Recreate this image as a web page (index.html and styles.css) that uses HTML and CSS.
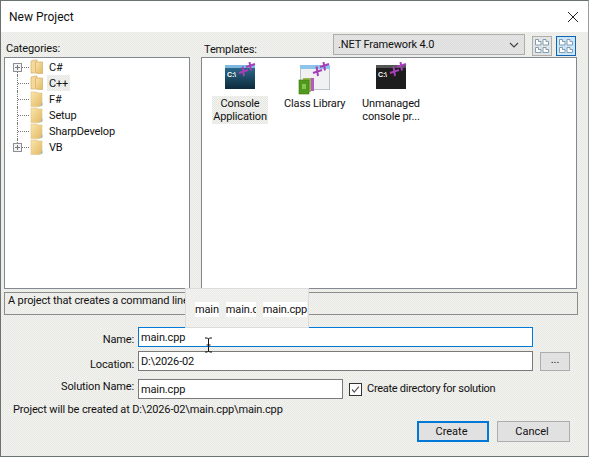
FILE: index.html
```html
<!DOCTYPE html>
<html lang="en">
<head>
    <meta charset="UTF-8">
    <meta name="viewport" content="width=device-width, initial-scale=1.0">
    <title>New Project</title>
    <link rel="stylesheet" href="styles.css">
</head>
<body>
    <svg class="defs" width="0" height="0">
        <defs>
            <linearGradient id="dark-blue" x1="0" y1="0" x2="0" y2="1">
                <stop offset="0" stop-color="#2f6f93"/>
                <stop offset="1" stop-color="#0d2a3c"/>
            </linearGradient>
            <linearGradient id="folder-fill" x1="0" y1="0" x2="1" y2="1">
                <stop offset="0" stop-color="#fbe6ad"/>
                <stop offset="1" stop-color="#e2b862"/>
            </linearGradient>
            <g id="plus-plus" fill="none" stroke="#a63fb8" stroke-width="2">
                <path d="M15 11 L24 8 M18.5 4.5 L20 14"/>
                <path d="M22 5 L31 2 M25.5 0 L27 8.5"/>
            </g>
            <symbol id="folder-open" viewBox="0 0 14 16">
                <path d="M1 2 L5 1 H7 V14 L1 14 Z" fill="#f6d998" stroke="#c9a45c" stroke-width=".6"/>
                <path d="M5.5 3 H12.5 V14.5 H7.5 L5.5 12 Z" fill="url(#folder-fill)" stroke="#c9a45c" stroke-width=".6"/>
            </symbol>
            <symbol id="folder-closed" viewBox="0 0 14 16">
                <path d="M1 1 H7 L8 2 H12 V14 L10 15.5 H1 Z" fill="url(#folder-fill)" stroke="#dcc48c" stroke-width=".6"/>
                <path d="M10.5 15 L12.5 11 V14.5 Z" fill="#8fb4d4"/>
            </symbol>
            <symbol id="view-grid" viewBox="0 0 16 16">
                <path d="M1.5 1.5 H4.5 V3.5 H7 V7 H1.5 Z M9 1.5 H12 V3.5 H14.5 V7 H9 Z M1.5 9.5 H4.5 V11.5 H7 V14.5 H1.5 Z M9 9.5 H12 V11.5 H14.5 V14.5 H9 Z" fill="#fff" stroke="#7f9db3" stroke-width="1"/>
            </symbol>
        </defs>
    </svg>

    <div class="window">
        <div class="titlebar">
            <span class="title">New Project</span>
            <svg class="close" width="12" height="12" viewBox="0 0 12 12"><path d="M1 1 L11 11 M11 1 L1 11" stroke="#222" stroke-width="1" fill="none"/></svg>
        </div>

        <div class="headings">
            <label class="head-categories">Categories:</label>
            <label class="head-templates">Templates:</label>
            <div class="combo">
                <span>.NET Framework 4.0</span>
                <svg width="10" height="6" viewBox="0 0 10 6"><path d="M1 1 L5 5 L9 1" stroke="#444" stroke-width="1.2" fill="none"/></svg>
            </div>
            <div class="view-btn"><svg width="16" height="16"><use href="#view-grid"/></svg></div>
            <div class="view-btn selected"><svg width="16" height="16"><use href="#view-grid"/></svg></div>
        </div>

        <div class="panels">
            <ul class="tree">
                <li class="tree-row"><span class="expander"></span><span class="dots"></span><svg class="folder" width="14" height="16"><use href="#folder-open"/></svg><span class="tree-label">C#</span></li>
                <li class="tree-row"><span class="dots no-box"></span><svg class="folder" width="14" height="16"><use href="#folder-open"/></svg><span class="tree-label current">C++</span></li>
                <li class="tree-row"><span class="dots no-box"></span><svg class="folder" width="14" height="16"><use href="#folder-closed"/></svg><span class="tree-label">F#</span></li>
                <li class="tree-row"><span class="dots no-box"></span><svg class="folder" width="14" height="16"><use href="#folder-closed"/></svg><span class="tree-label">Setup</span></li>
                <li class="tree-row"><span class="dots no-box"></span><svg class="folder" width="14" height="16"><use href="#folder-closed"/></svg><span class="tree-label">SharpDevelop</span></li>
                <li class="tree-row last"><span class="expander"></span><span class="dots"></span><svg class="folder" width="14" height="16"><use href="#folder-closed"/></svg><span class="tree-label">VB</span></li>
            </ul>

            <div class="templates">
                <div class="template first">
                    <svg class="template-icon" width="32" height="34" viewBox="0 0 32 34">
                        <rect x="1" y="3" width="30" height="24" fill="url(#dark-blue)"/>
                        <rect x="1" y="3" width="30" height="3" fill="#7db9de"/>
                        <text class="prompt" x="3" y="15">C:\</text>
                        <use href="#plus-plus"/>
                    </svg>
                    <span class="template-name current">Console Application</span>
                </div>
                <div class="template second">
                    <svg class="template-icon" width="34" height="34" viewBox="0 0 34 34">
                        <rect x="3.5" y="3.5" width="29" height="24" fill="#f1f1f1" stroke="#b9c4cc"/>
                        <rect x="3" y="3" width="30" height="4" fill="#8cc4ea"/>
                        <rect x="10" y="16" width="7" height="13" fill="#b657c8"/>
                        <rect x="6" y="16" width="8" height="14" fill="#9ab84a"/>
                        <rect x="2" y="18" width="10" height="14" fill="#4f9a1e" stroke="#3a7a12" stroke-width=".6"/>
                        <rect x="5" y="22" width="4" height="5" fill="#86c548"/>
                        <use href="#plus-plus" x="1"/>
                    </svg>
                    <span class="template-name">Class Library</span>
                </div>
                <div class="template third">
                    <svg class="template-icon" width="32" height="34" viewBox="0 0 32 34">
                        <rect x="1" y="3" width="30" height="24" fill="#1d1d1d"/>
                        <rect x="1" y="3" width="30" height="3" fill="#555"/>
                        <text class="prompt" x="3" y="15">C:\</text>
                        <use href="#plus-plus"/>
                    </svg>
                    <span class="template-name">Unmanaged<br>console pr...</span>
                </div>
            </div>
        </div>

        <div class="description">A project that creates a command line</div>

        <div class="form-row row-name">
            <label class="form-label">Name:</label>
            <input class="text-input focused wide" type="text" value="main.cpp">
        </div>
        <div class="form-row row-location">
            <label class="form-label">Location:</label>
            <input class="text-input wide" type="text" value="D:\2026-02">
            <button class="browse">...</button>
        </div>
        <div class="form-row row-solution">
            <label class="form-label">Solution Name:</label>
            <input class="text-input narrow" type="text" value="main.cpp">
            <span class="checkbox">
                <svg width="13" height="13" viewBox="0 0 13 13"><path d="M2.5 6.5 L5 9.5 L10.5 3" stroke="#555" stroke-width="1.4" fill="none"/></svg>
            </span>
            <span class="check-label">Create directory for solution</span>
        </div>

        <p class="target-path">Project will be created at D:\2026-02\main.cpp\main.cpp</p>

        <div class="actions">
            <button class="action default">Create</button>
            <button class="action">Cancel</button>
        </div>

        <!-- autocomplete popup floats over the description and name field -->
        <div class="suggest">
            <span class="suggest-item">main</span>
            <span class="suggest-item clipped">main.c</span>
            <span class="suggest-item">main.cpp</span>
        </div>
        <svg class="ibeam" width="9" height="16" viewBox="0 0 9 16">
            <path d="M1 1 H3.5 L4.5 2 L5.5 1 H8 M4.5 2 V14 M1 15 H3.5 L4.5 14 L5.5 15 H8 M2.5 8 H6.5" stroke="#111" stroke-width="1" fill="none"/>
        </svg>
    </div>
</body>
</html>
```

FILE: styles.css
```css
* { box-sizing: border-box; }
html, body { margin: 0; padding: 0; }
body {
    width: 589px;
    height: 457px;
    overflow: hidden;
    font-family: Roboto, 'Liberation Sans', sans-serif;
    font-size: 11px;
    letter-spacing: -0.14px;
    color: #111;
}
.defs { position: absolute; }
.window {
    position: relative;
    width: 589px;
    height: 457px;
    border: 1px solid #6b7272;
    border-right-color: #9aa0a0;
    background: repeating-conic-gradient(#f2f2f0 0 25%, #e9e9e4 0 50%) 0 0 / 2px 2px;
}
.titlebar {
    display: flex;
    align-items: center;
    justify-content: space-between;
    height: 31px;
    padding: 0 9px 0 8px;
    background: #fff;
}
.title { font-size: 12px; letter-spacing: 0; color: #111; }

.headings {
    display: flex;
    align-items: flex-end;
    height: 25px;
    padding-left: 5px;
}
.head-categories { width: 198px; padding-bottom: 2px; }
.head-templates { width: 129px; padding-bottom: 1px; }
.combo {
    display: flex;
    align-items: center;
    justify-content: space-between;
    width: 192px;
    height: 21px;
    margin-bottom: 2px;
    padding: 0 5px 0 4px;
    border: 1px solid #adadad;
    background: repeating-conic-gradient(#e6e6e6 0 25%, #dcdcdc 0 50%) 0 0 / 2px 2px;
}
.view-btn {
    display: flex;
    align-items: center;
    justify-content: center;
    width: 20px;
    height: 20px;
    margin: 0 0 1px 7px;
    border: 1px solid #adadad;
    background: #e4e4e2;
}
.view-btn + .view-btn { margin-left: 4px; }
.view-btn.selected {
    border-color: #0f64b4;
    background: #cde6f7;
}

.panels {
    display: flex;
    gap: 11px;
    height: 232px;
    padding-left: 3px;
}
.tree {
    width: 186px;
    margin: 0;
    padding: 1px 0 0 8px;
    list-style: none;
    border: 1px solid #828790;
    background: #fff;
}
.tree-row {
    position: relative;
    display: flex;
    align-items: center;
    height: 16px;
}
.tree-row::before {
    content: "";
    position: absolute;
    left: 4px;
    top: 0;
    height: 16px;
    border-left: 1px dotted #777;
}
.tree-row:first-child::before { top: 8px; height: 8px; }
.tree-row.last::before { height: 8px; }
.expander {
    position: relative;
    z-index: 1;
    width: 9px;
    height: 9px;
    border: 1px solid #8a8f98;
    background: linear-gradient(#777, #777) center / 5px 1px no-repeat,
        linear-gradient(#777, #777) center / 1px 5px no-repeat,
        #f4f4f4;
}
.dots {
    width: 7px;
    margin-right: 1px;
    border-top: 1px dotted #777;
}
.dots.no-box { width: 11px; margin-left: 5px; }
.folder { flex: none; margin-right: 3px; }
.tree-label { height: 16px; padding: 0 2px; line-height: 18px; }
.current { background: repeating-conic-gradient(#f2f2f0 0 25%, #e6e6e2 0 50%) 0 0 / 2px 2px; }

.templates {
    display: flex;
    align-items: flex-start;
    width: 376px;
    padding: 4px 0 0 10px;
    border: 1px solid #828790;
    background: #fff;
}
.template {
    display: flex;
    flex-direction: column;
    align-items: center;
    text-align: center;
    line-height: 13px;
}
.template.first { width: 56px; }
.template.second { width: 60px; margin-left: 16px; white-space: nowrap; }
.template.third { width: 60px; margin-left: 17px; white-space: nowrap; }
.template-icon { flex: none; }
.template-name { display: block; width: 100%; padding: 1px 0; }
.prompt { font-size: 7px; font-weight: 700; fill: #fff; font-family: 'Liberation Sans', sans-serif; }

.description {
    height: 23px;
    margin: 3px 10px 0 3px;
    padding: 1px 0 0 3px;
    border: 1px solid #8c8c8c;
    white-space: nowrap;
    overflow: hidden;
}

.form-row {
    display: flex;
    align-items: center;
    height: 20px;
    padding-right: 10px;
}
.row-name { margin-top: 12px; }
.row-location { margin-top: 4px; }
.row-solution { margin-top: 8px; }
.form-label { width: 137px; padding-right: 4px; text-align: right; }
.row-name .form-label { margin-top: 4px; }
.row-location .form-label { margin-top: 6px; }
.row-solution .form-label { margin-bottom: 6px; }
.text-input {
    height: 20px;
    padding: 0 2px;
    border: 1px solid #7a7a7a;
    background: #fff;
    color: #111;
    font: inherit;
    letter-spacing: inherit;
    outline: none;
}
.text-input.wide { width: 395px; }
.text-input.narrow { width: 205px; }
.text-input.focused { border-color: #0078d7; }
.browse {
    width: 30px;
    height: 19px;
    margin-left: 7px;
    padding: 0 0 4px;
    border: 1px solid #adadad;
    background: #e1e1e1;
    font: inherit;
    color: #111;
}
.checkbox {
    display: flex;
    width: 13px;
    height: 13px;
    margin-left: 6px;
    border: 1px solid #333;
    background: #fff;
    justify-content: center;
    align-items: center;
}
.check-label { margin: 0 0 2px 5px; letter-spacing: -0.27px; }

.target-path {
    margin: 3px 0 0 12px;
    height: 16px;
    line-height: 16px;
}

.actions {
    display: flex;
    justify-content: flex-end;
    gap: 8px;
    margin-top: 3px;
    padding-right: 18px;
}
.action {
    width: 73px;
    height: 21px;
    padding: 0 3px 0 0;
    border: 1px solid #adadad;
    background: #e1e1e1;
    font: inherit;
    color: #111;
}
.action.default {
    width: 72px;
    border: 2px solid #0078d7;
}

.suggest {
    position: absolute;
    left: 184px;
    top: 287px;
    display: flex;
    align-items: center;
    gap: 7px;
    width: 124px;
    height: 40px;
    padding: 2px 0 0 9px;
    border: 1px solid #dcdcdc;
    background: repeating-conic-gradient(#f2f2f0 0 25%, #ecece8 0 50%) 0 0 / 2px 2px;
}
.suggest-item { background: #fff; line-height: 15px; white-space: nowrap; }
.suggest-item.clipped { width: 30px; overflow: hidden; }
.ibeam {
    position: absolute;
    left: 203px;
    top: 336px;
}
```
